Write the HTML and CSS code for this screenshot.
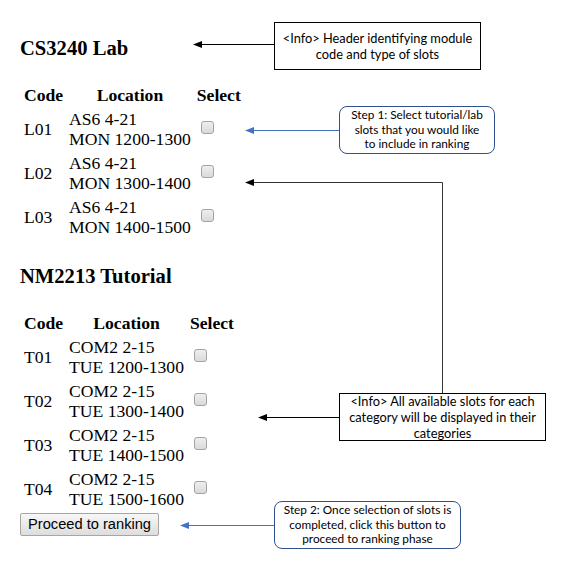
FILE: index.html
```html
<!DOCTYPE html>
<html lang="en">
<head>
    <meta charset="UTF-8">
    <meta name="viewport" content="width=device-width, initial-scale=1.0">
    <title>Select Slots</title>
    <link rel="stylesheet" href="styles.css">
</head>
<body>
    <div class="page">
        <!-- CS3240 Lab -->
        <h3>CS3240 Lab</h3>
        <table class="slots">
            <tr><th>Code</th><th>Location</th><th>Select</th></tr>
            <tr><td>L01</td><td>AS6 4-21<br>MON 1200-1300</td><td><input type="checkbox" name="slot" value="L01"></td></tr>
            <tr><td>L02</td><td>AS6 4-21<br>MON 1300-1400</td><td><input type="checkbox" name="slot" value="L02"></td></tr>
            <tr><td>L03</td><td>AS6 4-21<br>MON 1400-1500</td><td><input type="checkbox" name="slot" value="L03"></td></tr>
        </table>

        <!-- NM2213 Tutorial -->
        <h3>NM2213 Tutorial</h3>
        <table class="slots">
            <tr><th>Code</th><th>Location</th><th>Select</th></tr>
            <tr><td>T01</td><td>COM2 2-15<br>TUE 1200-1300</td><td><input type="checkbox" name="slot" value="T01"></td></tr>
            <tr><td>T02</td><td>COM2 2-15<br>TUE 1300-1400</td><td><input type="checkbox" name="slot" value="T02"></td></tr>
            <tr><td>T03</td><td>COM2 2-15<br>TUE 1400-1500</td><td><input type="checkbox" name="slot" value="T03"></td></tr>
            <tr><td>T04</td><td>COM2 2-15<br>TUE 1500-1600</td><td><input type="checkbox" name="slot" value="T04"></td></tr>
        </table>

        <button type="button" class="proceed-btn">Proceed to ranking</button>
    </div>

    <!-- annotations -->
    <svg class="arrows" width="569" height="587" viewBox="0 0 569 587">
        <g stroke="#000" stroke-width="1" fill="none">
            <line x1="274" y1="44.5" x2="200" y2="44.5"/>
            <polyline points="442.5,393 442.5,182.5 252,182.5" stroke="#333"/>
            <line x1="339" y1="417.5" x2="265" y2="417.5"/>
        </g>
        <g stroke="#4472c4" stroke-width="1" fill="none">
            <line x1="339" y1="130.5" x2="252" y2="130.5"/>
            <line x1="274" y1="525.5" x2="187" y2="525.5"/>
        </g>
        <g fill="#000">
            <polygon points="193,44.5 202,41 202,48"/>
            <polygon points="245,182.5 254,179 254,186"/>
            <polygon points="258,417.5 267,414 267,421"/>
        </g>
        <g fill="#4472c4">
            <polygon points="245,130.5 254,127 254,134"/>
            <polygon points="180,525.5 189,522 189,529"/>
        </g>
    </svg>

    <div class="note info note-header">&lt;Info&gt; Header identifying module<br>code and type of slots</div>
    <div class="note step note-step1">Step 1: Select tutorial/lab<br>slots that you would like<br>to include in ranking</div>
    <div class="note info note-slots">&lt;Info&gt; All available slots for each<br>category will be displayed in their<br>categories</div>
    <div class="note step note-step2">Step 2: Once selection of slots is<br>completed, click this button to<br>proceed to ranking phase</div>
</body>
</html>
```

FILE: styles.css
```css
  body {
      font-family: 'Liberation Serif', 'Times New Roman', serif;
      font-size: 17.6px;
      line-height: 20px;
      color: #000;
      background-color: #ffffff;
      margin: 0;
      padding: 0;
  }
  .page {
      padding: 12px 20px 0 20px;
  }
  h3 {
      font-size: 20.6px;
      line-height: 24px;
      font-weight: bold;
      margin: 24px 0 22px;
  }
  .slots {
      border-spacing: 2px;
  }
  .slots th {
      padding: 1px 2px;
      text-align: center;
  }
  .slots td {
      padding: 1px 2px;
      text-align: left;
  }
  .slots input[type="checkbox"] {
      appearance: none;
      -webkit-appearance: none;
      width: 13px;
      height: 13px;
      margin: 3px 3px 3px 4px;
      border: 1px solid #a3a3a3;
      border-radius: 3px;
      background: linear-gradient(#eeeeee, #dadada);
      box-sizing: border-box;
  }
  .proceed-btn {
      display: block;
      margin-top: 1px;
      font-family: 'Liberation Sans', Arial, sans-serif;
      font-size: 14.67px;
      line-height: 17px;
      color: #000;
      padding: 2px 7px;
      border: 1px solid #a6a6a6;
      border-radius: 2px;
      background: linear-gradient(#f7f7f7, #dddddd);
  }

  /* annotations */
  .arrows {
      position: absolute;
      top: 0;
      left: 0;
      pointer-events: none;
  }
  .note {
      position: absolute;
      box-sizing: border-box;
      display: flex;
      align-items: center;
      justify-content: center;
      text-align: center;
      font-family: Lato, 'Open Sans', sans-serif;
      color: #000;
      background: #fff;
  }
  .info {
      border: 1px solid #000;
      font-size: 12.8px;
      line-height: 16px;
      height: 48px;
      width: 207px;
  }
  .step {
      border: 1px solid #2f528f;
      border-radius: 8px;
      font-size: 11.8px;
      line-height: 14.5px;
      height: 48px;
  }
  .note-header {
      left: 274px;
      top: 22px;
  }
  .note-step1 {
      left: 339px;
      top: 106px;
      width: 156px;
  }
  .note-slots {
      left: 339px;
      top: 393px;
  }
  .note-step2 {
      left: 274px;
      top: 501px;
      width: 187px;
  }
```
